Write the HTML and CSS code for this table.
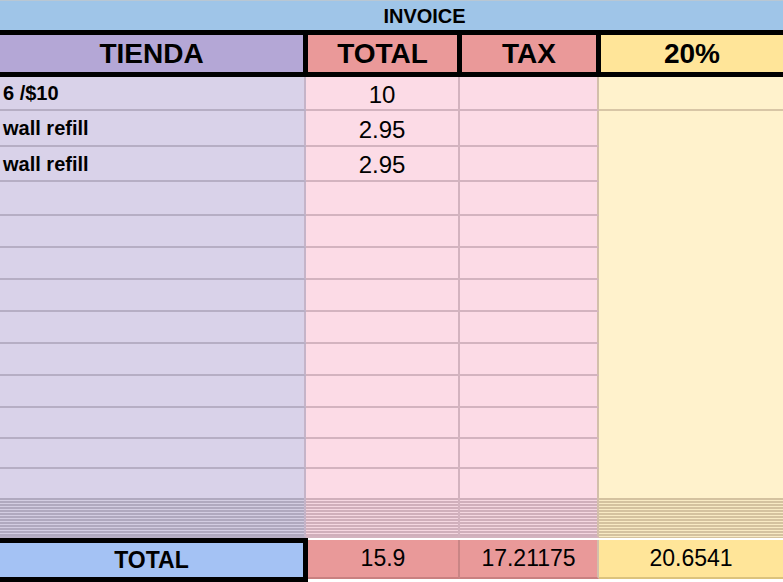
FILE: index.html
```html
<!DOCTYPE html>
<html>
<head>
<meta charset="utf-8">
<link rel="stylesheet" href="styles.css">
</head>
<body>
<div class="sheet">
  <div class="invoice">INVOICE</div>
  <div class="header">
    <div class="h h-a">TIENDA</div>
    <div class="h h-b">TOTAL</div>
    <div class="h h-b">TAX</div>
    <div class="h h-d">20%</div>
  </div>
  <div class="body">
    <div class="row r34 first"><div class="c a">6 /$10</div><div class="c b">10</div><div class="c cc"></div><div class="c d line"></div></div>
    <div class="row r36"><div class="c a">wall refill</div><div class="c b">2.95</div><div class="c cc"></div><div class="c d"></div></div>
    <div class="row r35"><div class="c a">wall refill</div><div class="c b">2.95</div><div class="c cc"></div><div class="c d"></div></div>
    <div class="row r34"><div class="c a"></div><div class="c b"></div><div class="c cc"></div><div class="c d"></div></div>
    <div class="row r32"><div class="c a"></div><div class="c b"></div><div class="c cc"></div><div class="c d"></div></div>
    <div class="row r32"><div class="c a"></div><div class="c b"></div><div class="c cc"></div><div class="c d"></div></div>
    <div class="row r32"><div class="c a"></div><div class="c b"></div><div class="c cc"></div><div class="c d"></div></div>
    <div class="row r32"><div class="c a"></div><div class="c b"></div><div class="c cc"></div><div class="c d"></div></div>
    <div class="row r32"><div class="c a"></div><div class="c b"></div><div class="c cc"></div><div class="c d"></div></div>
    <div class="row r32"><div class="c a"></div><div class="c b"></div><div class="c cc"></div><div class="c d"></div></div>
    <div class="row r31"><div class="c a"></div><div class="c b"></div><div class="c cc"></div><div class="c d"></div></div>
    <div class="row r30"><div class="c a"></div><div class="c b"></div><div class="c cc"></div><div class="c d"></div></div>
    <div class="row r29"><div class="c a noline"></div><div class="c b noline"></div><div class="c cc noline"></div><div class="c d"></div></div>
    <div class="row dense"><div class="c a"></div><div class="c b"></div><div class="c cc"></div><div class="c d"></div></div>
  </div>
  <div class="totals">
    <div class="t t-a">TOTAL</div>
    <div class="t t-b">15.9</div>
    <div class="t t-c">17.21175</div>
    <div class="t t-d">20.6541</div>
  </div>
</div>
</body>
</html>
```
FILE: styles.css
```css
html, body {
  margin: 0;
  padding: 0;
  background: #ffffff;
}
body {
  font-family: "Liberation Sans", Arial, sans-serif;
  color: #000;
  width: 783px;
  height: 582px;
  overflow: hidden;
}
.sheet {
  width: 783px;
}
.invoice {
  height: 29px;
  border-top: 1px solid #b9c7d3;
  background: #9fc5e8;
  font-weight: bold;
  font-size: 20px;
  line-height: 31px;
  text-align: center;
  padding-left: 66px;
  box-sizing: content-box;
}
.header {
  background: #000;
  padding: 5px 0;
  display: grid;
  grid-template-columns: 303px 149px 134px 1fr;
  column-gap: 5px;
}
.h {
  height: 37px;
  font-weight: bold;
  font-size: 28px;
  line-height: 38px;
  text-align: center;
}
.h-a { background: #b4a7d6; }
.h-b { background: #ea9999; }
.h-d { background: #ffe599; }

.row {
  display: grid;
  grid-template-columns: 306px 154px 139px 1fr;
}
.r34 { height: 34px; }
.r36 { height: 36px; }
.r35 { height: 35px; }
.r32 { height: 32px; }
.r31 { height: 31px; }
.r30 { height: 30px; }
.r29 { height: 29px; }
.c {
  box-sizing: border-box;
  display: flex;
  align-items: center;
}
.a {
  background: #d9d2e9;
  border-right: 2px solid #c5b4c8;
  border-bottom: 2px solid #b6aec4;
  font-weight: bold;
  font-size: 20px;
  padding-left: 3px;
  padding-top: 1px;
}
.b {
  background: #fcdbe6;
  border-right: 2px solid #d3b3bf;
  border-bottom: 2px solid #d3b3bf;
  justify-content: center;
  font-size: 24px;
  padding-top: 3px;
}
.cc {
  background: #fcdbe6;
  border-right: 2px solid #d3bfab;
  border-bottom: 2px solid #d3b3bf;
}
.d {
  background: #fff2cc;
}
.d.line {
  border-bottom: 2px solid #d8c6a6;
}
.noline {
  border-bottom: none;
}
.dense {
  height: 40px;
}
.dense .a {
  background: repeating-linear-gradient(to bottom, #b0a9bf 0 2px, #d3cde2 2px 3px);
}
.dense .b, .dense .cc {
  background: repeating-linear-gradient(to bottom, #d0afbb 0 2px, #f5d7e1 2px 3px);
}
.dense .d {
  background: repeating-linear-gradient(to bottom, #d4c29f 0 2px, #f8eac4 2px 3px);
}

.totals {
  display: grid;
  grid-template-columns: 308px 152px 139px 1fr;
  height: 44px;
}
.t {
  box-sizing: border-box;
  display: flex;
  align-items: center;
  justify-content: center;
  font-size: 23px;
}
.t-a {
  background: #a4c2f4;
  border: 5px solid #000;
  border-left: none;
  font-weight: bold;
  height: 44px;
}
.t-b, .t-c {
  margin-top: 2px;
  height: 39px;
  background: #e99999;
  border-right: 2px solid #c98585;
  border-bottom: 2px solid #c98080;
}
.t-c {
  border-right-color: #d3bfab;
}
.t-d {
  margin-top: 2px;
  height: 39px;
  background: #ffe599;
  border-bottom: 2px solid #dcc37c;
}
```
